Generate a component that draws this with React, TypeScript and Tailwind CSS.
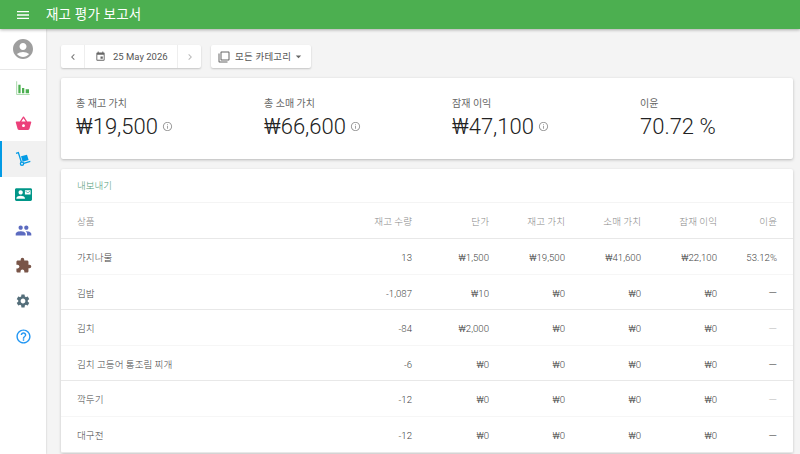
import { ReactNode } from 'react';
import {
  MdMenu,
  MdAccountCircle,
  MdShoppingBasket,
  MdContactMail,
  MdPeople,
  MdExtension,
  MdSettings,
  MdHelpOutline,
  MdChevronLeft,
  MdChevronRight,
  MdEvent,
  MdFilterNone,
  MdArrowDropDown,
  MdInfoOutline,
} from 'react-icons/md';

const font = { fontFamily: '"Roboto", "Noto Sans CJK KR", sans-serif' };

function Dolly({ className }: { className?: string }) {
  return (
    <svg viewBox="0 0 24 24" className={className} fill="none" stroke="currentColor" strokeWidth="2">
      <path d="M1.5 3.5 5 2.5 9.5 16.5" />
      <circle cx="10.5" cy="19" r="2.4" />
      <path d="M13 18.5 23 15.5" />
      <path d="m9 8 9-2.5 2.5 8-9 2.5z" fill="currentColor" stroke="none" />
    </svg>
  );
}

function BarsIcon({ className }: { className?: string }) {
  return (
    <svg viewBox="0 0 24 24" className={className} fill="currentColor">
      <path d="M2 2h1.2v19H22v1.2H2z" opacity="0.6" />
      <path d="M5 7h3.4v13H5zM10.5 12h3.4v8h-3.4zM16 14h5v6h-5z" />
    </svg>
  );
}

const products = [
  { name: '가지나물', qty: '13', price: '₩1,500', stock: '₩19,500', sales: '₩41,600', profit: '₩22,100', margin: '53.12%' },
  { name: '김밥', qty: '-1,087', price: '₩10', stock: '₩0', sales: '₩0', profit: '₩0', margin: '—' },
  { name: '김치', qty: '-84', price: '₩2,000', stock: '₩0', sales: '₩0', profit: '₩0', margin: '—' },
  { name: '김치 고등어 통조림 찌개', qty: '-6', price: '₩0', stock: '₩0', sales: '₩0', profit: '₩0', margin: '—' },
  { name: '깍두기', qty: '-12', price: '₩0', stock: '₩0', sales: '₩0', profit: '₩0', margin: '—' },
  { name: '대구전', qty: '-12', price: '₩0', stock: '₩0', sales: '₩0', profit: '₩0', margin: '—' },
];

function NavItem({ children, active }: { children: ReactNode; active?: boolean }) {
  return (
    <div className={`h-[35.6px] shrink-0 flex items-center justify-center border-l-[2px] pr-[2px] ${active ? 'border-[#039be5] bg-[#f1f1f1]' : 'border-transparent'}`}>
      {children}
    </div>
  );
}

function Stat({ label, value, info = true }: { label: string; value: string; info?: boolean }) {
  return (
    <div className="w-[188px] shrink-0">
      <div className="text-[10px] leading-[12px] text-[#666]">{label}</div>
      <div className="flex items-center mt-[2px]">
        <span className="text-[22px] leading-[30px] text-[#222] font-light">{value}</span>
        {info && <MdInfoOutline className="ml-[4px] text-[#999]" size={11} />}
      </div>
    </div>
  );
}

const cols = 'grid grid-cols-[1fr_69px_77px_76px_76px_76px_60px] items-center pl-[16px] pr-[16px] pt-[4px] text-[9.6px] font-light';

export default function App() {
  return (
    <div style={font} className="w-[800px] h-[454px] overflow-hidden bg-[#f4f4f4] flex flex-col">
      <header className="h-[29px] shrink-0 bg-[#4caf50] flex items-center text-white shadow-[0_1px_3px_rgba(0,0,0,0.3)] relative z-10">
        <MdMenu size={16} className="ml-[15px]" />
        <span className="ml-[15px] text-[13.5px] tracking-[0.2px]">재고 평가 보고서</span>
      </header>
      <div className="flex flex-1 min-h-0">
        <aside className="w-[46px] shrink-0 bg-white shadow-[0_0_2px_rgba(0,0,0,0.2)] flex flex-col">
          <div className="h-[41px] shrink-0 flex items-center justify-center border-b border-[#e8e8e8]">
            <MdAccountCircle size={24} className="text-[#9e9e9e]" />
          </div>
          <NavItem><BarsIcon className="w-[16px] h-[16px] text-[#4caf50]" /></NavItem>
          <NavItem><MdShoppingBasket size={17} className="text-[#ec407a]" /></NavItem>
          <NavItem active><Dolly className="w-[16px] h-[16px] text-[#039be5]" /></NavItem>
          <NavItem><MdContactMail size={17} className="text-[#009688]" /></NavItem>
          <NavItem><MdPeople size={17} className="text-[#5c6bc0]" /></NavItem>
          <NavItem><MdExtension size={17} className="text-[#795548]" /></NavItem>
          <NavItem><MdSettings size={16} className="text-[#546e7a]" /></NavItem>
          <NavItem><MdHelpOutline size={17} className="text-[#2196f3]" /></NavItem>
        </aside>
        <main className="flex-1 min-w-0 pl-[15px] pr-[7px] pt-[16px]">
          <div className="flex gap-[10px] h-[23px]">
            <div className="flex bg-white rounded-[2px] shadow-[0_1px_2px_rgba(0,0,0,0.2)] text-[9.5px] text-[#555]">
              <div className="w-[24px] flex items-center justify-center border-r border-[#eee]"><MdChevronLeft size={12} className="text-[#777]" /></div>
              <div className="w-[93px] flex items-center pl-[10px] border-r border-[#eee]">
                <MdEvent size={11} className="mr-[7px] text-[#666]" />
                <span className="pt-[1px]">25 May 2026</span>
              </div>
              <div className="w-[23px] flex items-center justify-center"><MdChevronRight size={12} className="text-[#bbb]" /></div>
            </div>
            <div className="w-[100px] flex items-center pl-[7px] bg-white rounded-[2px] shadow-[0_1px_2px_rgba(0,0,0,0.2)] text-[9.5px] text-[#555]">
              <MdFilterNone size={12} className="mr-[5px] text-[#666]" />
              <span className="tracking-[0.2px] pt-[1px]">모든 카테고리</span>
              <MdArrowDropDown size={13} className="ml-[1px] text-[#666]" />
            </div>
          </div>
          <section className="mt-[10px] h-[81px] bg-white rounded-[2px] shadow-[0_1px_3px_rgba(0,0,0,0.25)] flex items-center pl-[15px] pt-[2px]">
            <Stat label="총 재고 가치" value="₩19,500" />
            <Stat label="총 소매 가치" value="₩66,600" />
            <Stat label="잠재 이익" value="₩47,100" />
            <Stat label="이윤" value="70.72 %" info={false} />
          </section>
          <section className="mt-[10px] bg-white rounded-[2px] shadow-[0_1px_3px_rgba(0,0,0,0.2)]">
            <div className="h-[34px] flex items-center pl-[16px] pt-[2px] text-[9.5px] font-light text-[#4f9a78] border-b border-[#f4f4f4]">내보내기</div>
            <div className={`${cols} h-[36px] text-[#888] border-b border-[#e8e8e8]`}>
              <div>상품</div>
              <div className="text-right">재고 수량</div>
              <div className="text-right">단가</div>
              <div className="text-right">재고 가치</div>
              <div className="text-right">소매 가치</div>
              <div className="text-right">잠재 이익</div>
              <div className="text-right">이윤</div>
            </div>
            {products.map((p, i) => (
              <div key={p.name} className={`${cols} h-[35.6px] text-[#444] border-b ${i % 2 === 0 ? 'border-[#f6f6f6]' : 'border-[#e8e8e8]'}`}>
                <div>{p.name}</div>
                <div className="text-right">{p.qty}</div>
                <div className="text-right">{p.price}</div>
                <div className="text-right">{p.stock}</div>
                <div className="text-right">{p.sales}</div>
                <div className="text-right">{p.profit}</div>
                {p.margin === '—' ? (
                  <div className={`text-right text-[11px] leading-none ${i % 2 === 0 ? 'text-[#bbb]' : ''}`}>{p.margin}</div>
                ) : (
                  <div className="text-right">{p.margin}</div>
                )}
              </div>
            ))}
          </section>
        </main>
      </div>
    </div>
  );
}
